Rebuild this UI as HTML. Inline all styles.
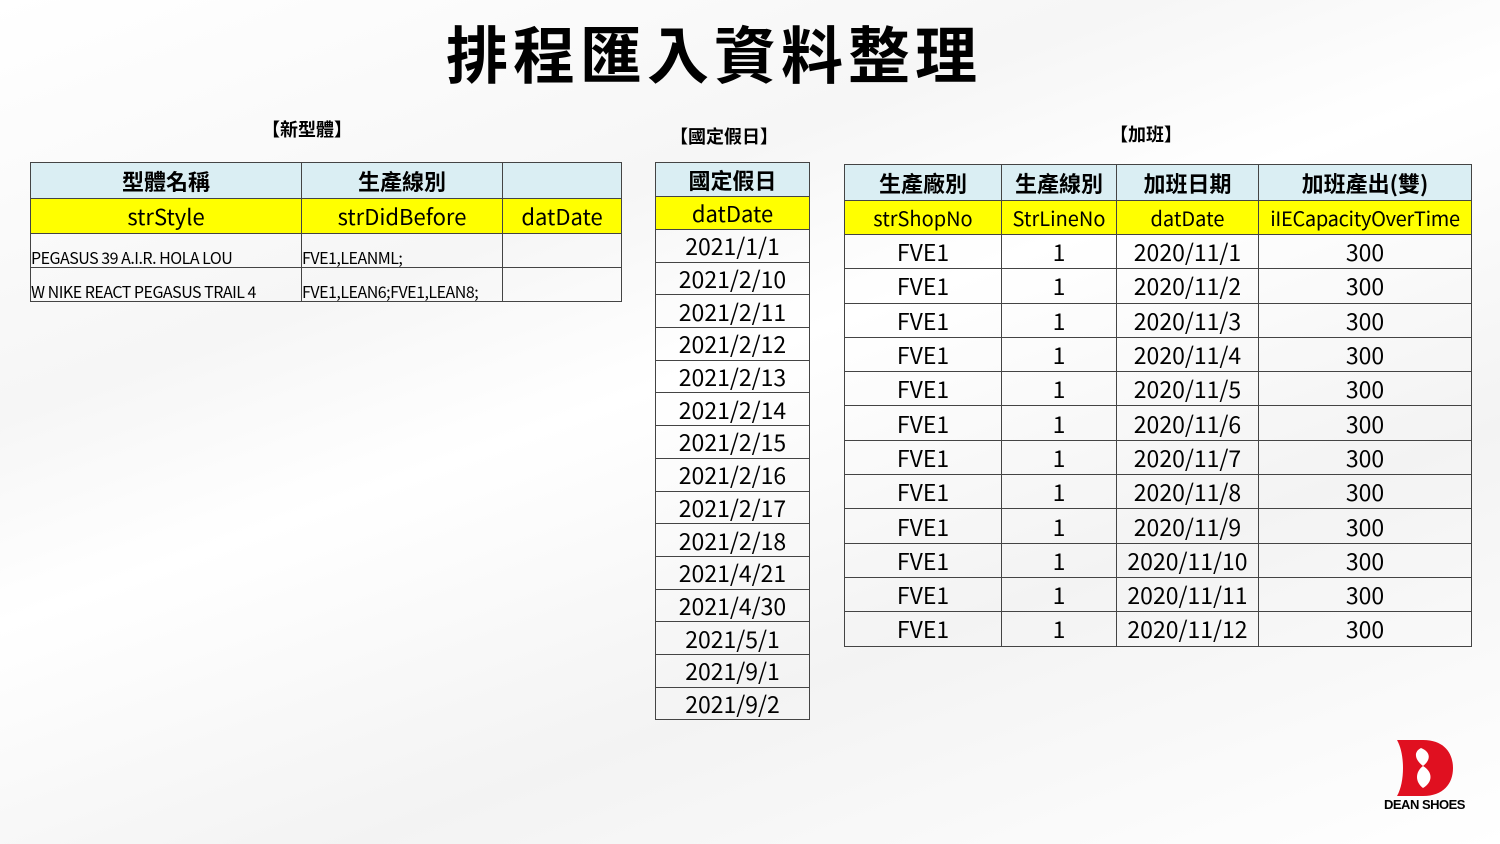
<!DOCTYPE html>
<html><head><meta charset="utf-8"><style>
body{margin:0;width:1500px;height:844px;background:#fff;position:relative;overflow:hidden;font-family:"Liberation Sans","Noto Sans CJK TC",sans-serif;color:#000}
.bg{position:absolute;inset:0;background:linear-gradient(160deg,#fff 0%,#f6f6f6 30%,#fff 45%,#f3f3f3 70%,#fff 100%)}
.t{position:absolute;font-weight:bold;line-height:1}
table{position:absolute;border-collapse:collapse;table-layout:fixed}
td{border:1px solid #444;padding:0;text-align:center;white-space:nowrap;overflow:hidden;font-family:"Noto Sans CJK TC","Liberation Sans",sans-serif;line-height:1}
.h td{background:#daeef3;font-size:22px;font-weight:bold}
.y td{background:#ffff00;font-size:22px}
#L .d td{font-size:16px;text-align:left;vertical-align:bottom;letter-spacing:-0.5px;padding-bottom:2px}
#M td,#R td{font-size:23px}
</style></head><body>
<div class="bg"></div>
<div class="t" style="left:446px;top:20px;font-size:62px;font-family:'Noto Sans CJK TC',sans-serif;letter-spacing:5px">排程匯入資料整理</div>
<div class="t" style="left:262px;top:120px;font-size:18px;font-family:'Noto Sans CJK TC',sans-serif">【新型體】</div>
<div class="t" style="left:670px;top:127px;font-size:18px;font-family:'Noto Sans CJK TC',sans-serif">【國定假日】</div>
<div class="t" style="left:1110px;top:125px;font-size:18px;font-family:'Noto Sans CJK TC',sans-serif">【加班】</div>

<table id="L" style="left:30px;top:162px;width:591px">
<col style="width:271px"><col style="width:201px"><col style="width:119px">
<tr class="h" style="height:36px"><td>型體名稱</td><td>生產線別</td><td></td></tr>
<tr class="y" style="height:35px"><td>strStyle</td><td>strDidBefore</td><td>datDate</td></tr>
<tr class="d" style="height:34px"><td>PEGASUS 39 A.I.R. HOLA LOU</td><td>FVE1,LEANML;</td><td></td></tr>
<tr class="d" style="height:34px"><td>W NIKE REACT PEGASUS TRAIL 4</td><td>FVE1,LEAN6;FVE1,LEAN8;</td><td></td></tr>
</table>

<table id="M" style="left:655px;top:162px;width:155px">
<tr class="h" style="height:34px"><td style="font-size:22px">國定假日</td></tr>
<tr class="y" style="height:33px"><td style="font-size:22px">datDate</td></tr>
<tr style="height:32.7px"><td>2021/1/1</td></tr>
<tr style="height:32.7px"><td>2021/2/10</td></tr>
<tr style="height:32.7px"><td>2021/2/11</td></tr>
<tr style="height:32.7px"><td>2021/2/12</td></tr>
<tr style="height:32.7px"><td>2021/2/13</td></tr>
<tr style="height:32.7px"><td>2021/2/14</td></tr>
<tr style="height:32.7px"><td>2021/2/15</td></tr>
<tr style="height:32.7px"><td>2021/2/16</td></tr>
<tr style="height:32.7px"><td>2021/2/17</td></tr>
<tr style="height:32.7px"><td>2021/2/18</td></tr>
<tr style="height:32.7px"><td>2021/4/21</td></tr>
<tr style="height:32.7px"><td>2021/4/30</td></tr>
<tr style="height:32.7px"><td>2021/5/1</td></tr>
<tr style="height:32.7px"><td>2021/9/1</td></tr>
<tr style="height:32.7px"><td>2021/9/2</td></tr>
</table>

<table id="R" style="left:844px;top:164px;width:627px">
<col style="width:157px"><col style="width:115px"><col style="width:142px"><col style="width:213px">
<tr class="h" style="height:36px"><td style="font-size:22px">生產廠別</td><td style="font-size:22px">生產線別</td><td style="font-size:22px">加班日期</td><td style="font-size:22px">加班產出(雙)</td></tr>
<tr class="y" style="height:34px"><td style="font-size:20px">strShopNo</td><td style="font-size:20px">StrLineNo</td><td style="font-size:20px">datDate</td><td style="font-size:20px;letter-spacing:-0.3px">iIECapacityOverTime</td></tr>
<tr style="height:34.3px"><td>FVE1</td><td>1</td><td>2020/11/1</td><td>300</td></tr>
<tr style="height:34.3px"><td>FVE1</td><td>1</td><td>2020/11/2</td><td>300</td></tr>
<tr style="height:34.3px"><td>FVE1</td><td>1</td><td>2020/11/3</td><td>300</td></tr>
<tr style="height:34.3px"><td>FVE1</td><td>1</td><td>2020/11/4</td><td>300</td></tr>
<tr style="height:34.3px"><td>FVE1</td><td>1</td><td>2020/11/5</td><td>300</td></tr>
<tr style="height:34.3px"><td>FVE1</td><td>1</td><td>2020/11/6</td><td>300</td></tr>
<tr style="height:34.3px"><td>FVE1</td><td>1</td><td>2020/11/7</td><td>300</td></tr>
<tr style="height:34.3px"><td>FVE1</td><td>1</td><td>2020/11/8</td><td>300</td></tr>
<tr style="height:34.3px"><td>FVE1</td><td>1</td><td>2020/11/9</td><td>300</td></tr>
<tr style="height:34.3px"><td>FVE1</td><td>1</td><td>2020/11/10</td><td>300</td></tr>
<tr style="height:34.3px"><td>FVE1</td><td>1</td><td>2020/11/11</td><td>300</td></tr>
<tr style="height:34.3px"><td>FVE1</td><td>1</td><td>2020/11/12</td><td>300</td></tr>
</table>

<svg style="position:absolute;left:1395px;top:738px" width="60" height="60" viewBox="0 0 60 60">
<path d="M2 2 H28 C50 2 58 16 58 30 C58 46 48 58 28 58 H2 C10 44 10 16 2 2 Z" fill="#e01020"/>
<path d="M26 10 C36 14 36 22 28 28 C38 34 38 44 28 50 C20 44 20 34 28 28 C20 22 18 14 26 10 Z" fill="#fff"/>
</svg>
<div style="position:absolute;left:1384px;top:797px;font-size:13px;font-weight:900;letter-spacing:-0.5px;font-family:'Liberation Sans',sans-serif">DEAN SHOES</div>
</body></html>
